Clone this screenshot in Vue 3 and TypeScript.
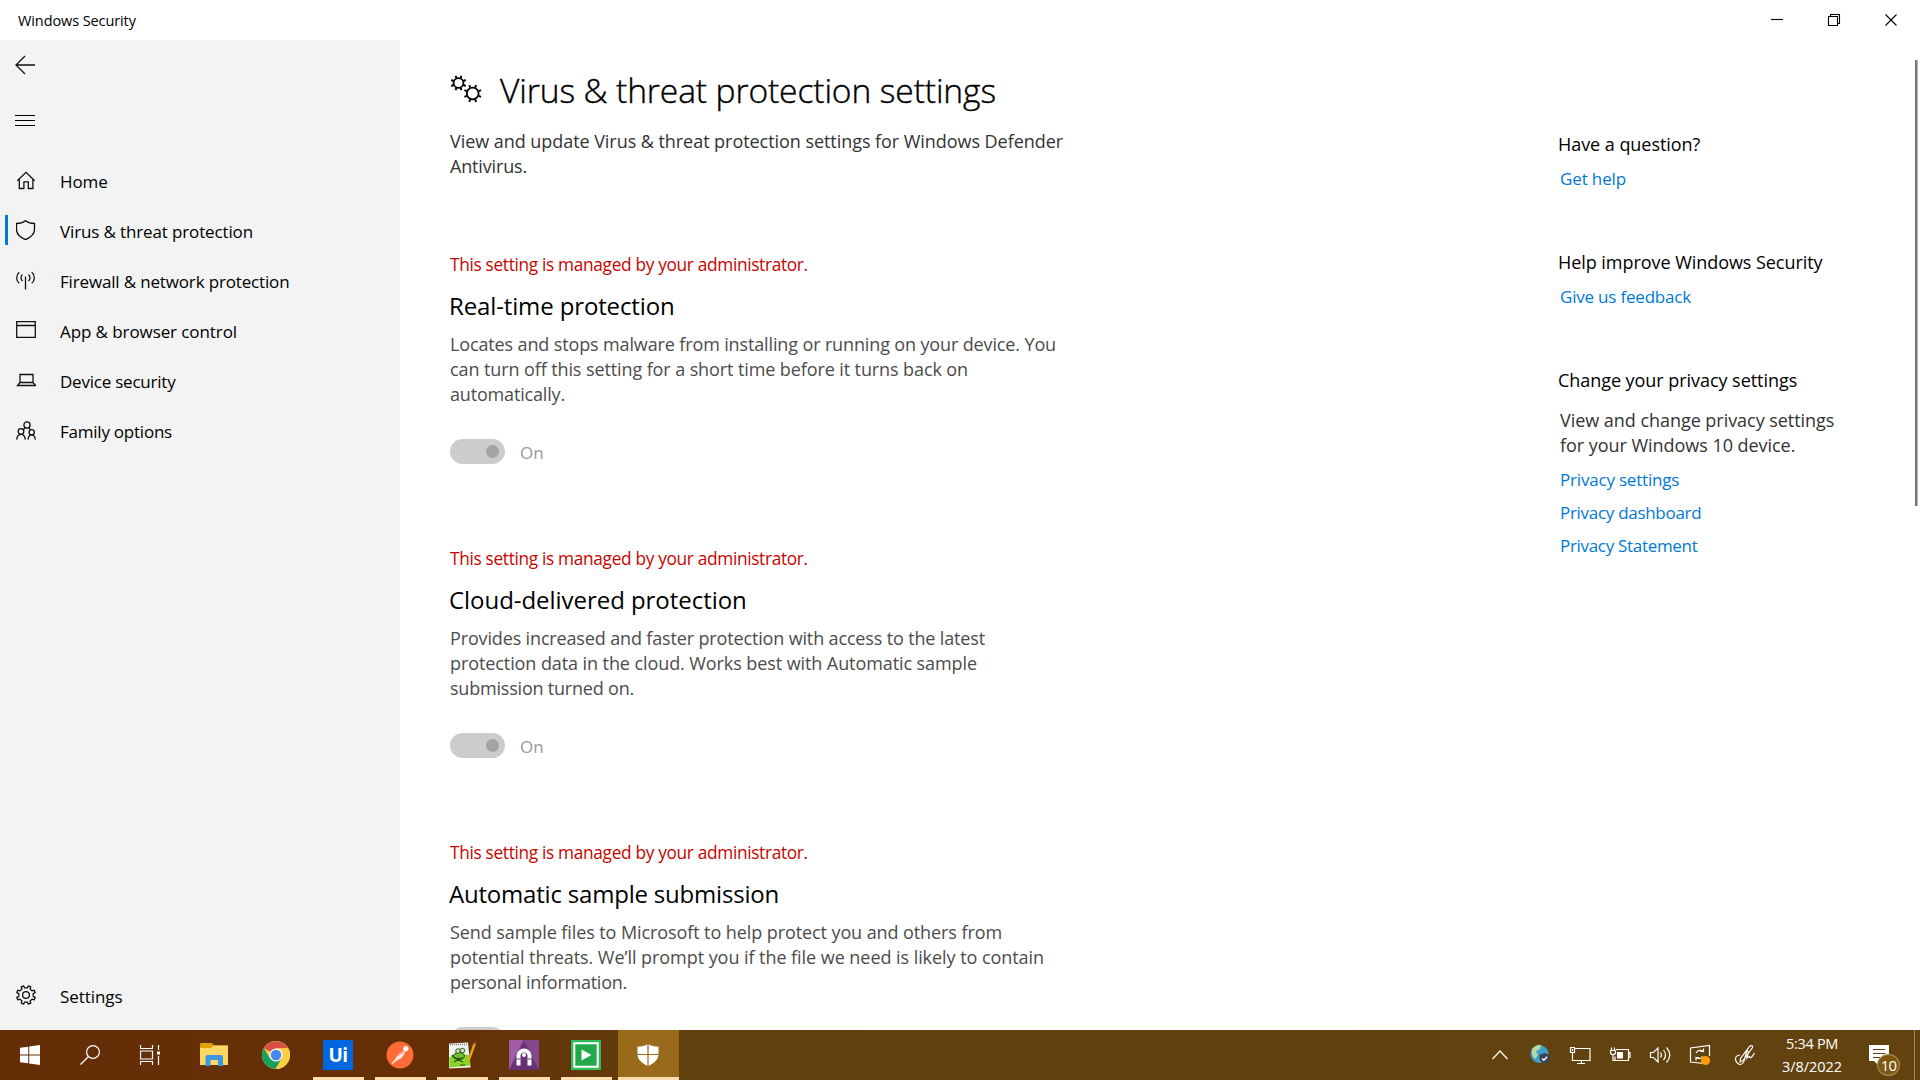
<script setup lang="ts">
/* Each text carries its own tracking, in px. */
type Tracked = [string, number]

const nav: [string, string, number][] = [
  ['home', 'Home', -0.12],
  ['virus', 'Virus & threat protection', -0.134],
  ['firewall', 'Firewall & network protection', -0.16],
  ['app', 'App & browser control', -0.089],
  ['device', 'Device security', -0.22],
  ['family', 'Family options', -0.23],
]

const sections: { title: Tracked; lines: Tracked[]; state?: string }[] = [
  {
    title: ['Real-time protection', -0.13],
    lines: [
      ['Locates and stops malware from installing or running on your device. You', -0.133],
      ['can turn off this setting for a short time before it turns back on', -0.101],
      ['automatically.', -0.17],
    ],
    state: 'On',
  },
  {
    title: ['Cloud-delivered protection', -0.045],
    lines: [
      ['Provides increased and faster protection with access to the latest', -0.148],
      ['protection data in the cloud. Works best with Automatic sample', -0.086],
      ['submission turned on.', -0.205],
    ],
    state: 'On',
  },
  {
    title: ['Automatic sample submission', -0.2],
    lines: [
      ['Send sample files to Microsoft to help protect you and others from', -0.087],
      ['potential threats. We’ll prompt you if the file we need is likely to contain', -0.055],
      ['personal information.', -0.247],
    ],
  },
]

const privacyLinks: Tracked[] = [
  ['Privacy settings', -0.19],
  ['Privacy dashboard', -0.29],
  ['Privacy Statement', -0.31],
]

const ls = (v: number) => ({ letterSpacing: v + 'px' })

/* Toothed outline for the settings glyph, drawn around (c, c). */
function gear(c: number, teeth: number, outer: number, inner: number): string {
  const pts: string[] = []
  const step = (Math.PI * 2) / teeth
  const shape: [number, number][] = [[-0.26, inner], [-0.17, outer], [0.17, outer], [0.26, inner]]
  for (let i = 0; i < teeth; i++) {
    for (const [o, r] of shape) {
      const a = (i + o + 0.5) * step
      pts.push(`${(c + r * Math.cos(a)).toFixed(2)} ${(c + r * Math.sin(a)).toFixed(2)}`)
    }
  }
  return 'M' + pts.join('L') + 'Z'
}
const settingsGear = gear(10, 8, 9.5, 7.3)

/* Short radial strokes around a ring: the teeth of the heading's two gears. */
function ticks(cx: number, cy: number, n: number, r0: number, r1: number): string {
  let d = ''
  for (let i = 0; i < n; i++) {
    const a = ((i + 0.5) * Math.PI * 2) / n
    d += `M${(cx + r0 * Math.cos(a)).toFixed(2)} ${(cy + r0 * Math.sin(a)).toFixed(2)}L${(cx + r1 * Math.cos(a)).toFixed(2)} ${(cy + r1 * Math.sin(a)).toFixed(2)}`
  }
  return d
}
const headTicks = ticks(8.5, 8, 8, 5.3, 7.8) + ticks(22.7, 18.5, 8, 6.3, 9)
</script>

<template>
  <div class="desktop">
    <header class="titlebar">
      <span class="t-cap">Windows Security</span>
      <div class="wbtns">
        <svg viewBox="0 0 57 40"><path d="M22 19.500h12" /></svg>
        <svg viewBox="0 0 57 40"><path d="M22.500 16.500h9v9h-9zM24.500 16.500v-2h9v9h-2" /></svg>
        <svg viewBox="0 0 57 40"><path d="M22.500 14.500l11 11M33.500 14.500l-11 11" /></svg>
      </div>
    </header>

    <div class="body">
      <aside class="side">
        <svg class="back" viewBox="0 0 20 20"><path d="M20 10H1M10 1L1 10l9 9" /></svg>
        <svg class="burger" viewBox="0 0 20 12"><path d="M0 .5h20M0 5.500h20M0 10.500h20" /></svg>
        <nav>
          <div v-for="[id, label, sp] in nav" :key="id" class="item" :class="{ on: id === 'virus' }">
            <svg viewBox="0 0 20 20">
              <template v-if="id === 'home'"><path d="M1.300 10.800L10 2.300l8.700 8.500M3.300 9.500v9h4.600v-6.700h4.400v6.700h4.600v-9" /></template>
              <template v-else-if="id === 'virus'"><path d="M9.500.8c2.600 2 5.600 2.700 9 2.700v6.100c0 4.600-3.700 7.800-9 10.100C4.200 17.400.5 14.200.5 9.600V3.500c3.400 0 6.400-.7 9-2.700z" /></template>
              <template v-else-if="id === 'firewall'"><path d="M9.500 6.500v13M3.300 2.300C-.2 5-.2 10.500 3.300 13.200M6.500 4.500c-2 1.700-2 4.900 0 6.600M15.700 2.300c3.500 2.700 3.500 8.200 0 10.900M12.500 4.500c2 1.700 2 4.900 0 6.600" /></template>
              <template v-else-if="id === 'app'"><path d="M.7 1.700h18.600v15.600H.7zM.7 5.500h18.600" /></template>
              <template v-else-if="id === 'device'"><path d="M4 4.500h13v8H4zM4 12.500l-2.500 3h18l-2.500-3" /></template>
              <template v-else><circle cx="11" cy="5" r="3.100" /><circle cx="5" cy="11.500" r="2.800" /><circle cx="15.700" cy="12.300" r="2.600" /><path d="M.7 19.600c.3-3.300 2-5.300 4.300-5.300s4 2 4.300 5.300M12 19.600c.3-2.900 1.600-4.700 3.700-4.700s3.300 1.800 3.600 4.700M9.200 7.700L7.500 9.500M12.900 7.700l1.300 2" /></template>
            </svg>
            <span :style="ls(sp)">{{ label }}</span>
          </div>
        </nav>
        <div class="item foot">
          <svg viewBox="0 0 20 20"><path :d="settingsGear" stroke-linejoin="round" /><circle cx="10" cy="10" r="3.400" /></svg>
          <span :style="ls(-0.06)">Settings</span>
        </div>
      </aside>

      <main class="main">
        <div class="col">
          <div class="h1row">
            <svg viewBox="0 0 32 28"><circle cx="8.500" cy="8" r="4.900" /><circle cx="22.700" cy="18.500" r="5.900" /><path :d="headTicks" stroke-width="2" /></svg>
            <h1>Virus &amp; threat protection settings</h1>
          </div>
          <p class="intro"><span :style="ls(-0.052)">View and update Virus &amp; threat protection settings for Windows Defender</span><br><span :style="ls(-0.16)">Antivirus.</span></p>
          <section v-for="s in sections" :key="s.title[0]">
            <p class="admin">This setting is managed by your administrator.</p>
            <h2 :style="ls(s.title[1])">{{ s.title[0] }}</h2>
            <p class="desc"><template v-for="[l, sp] in s.lines" :key="l"><span :style="ls(sp)">{{ l }}</span><br></template></p>
            <div class="tog"><i><b /></i><span v-if="s.state">{{ s.state }}</span></div>
          </section>
        </div>
        <aside class="right">
          <h3>Have a question?</h3>
          <a :style="ls(-0.13)">Get help</a>
          <h3 class="g">Help improve Windows Security</h3>
          <a :style="ls(-0.2)">Give us feedback</a>
          <h3 class="g">Change your privacy settings</h3>
          <p>View and change privacy settings<br>for your Windows 10 device.</p>
          <a v-for="[l, sp] in privacyLinks" :key="l" :style="ls(sp)">{{ l }}</a>
        </aside>
        <div class="scroll" />
      </main>
    </div>

    <footer class="bar">
      <div class="cell s"><svg viewBox="0 0 20 20" width="20"><path fill="#fff" d="M0 2.800L8.200 1.700V9.500H0zM9.200 1.500L20 0v9.500H9.200zM0 10.500h8.200v7.800L0 17.200zM9.200 10.500H20V20L9.200 18.500z" /></svg></div>
      <div class="cell s"><svg viewBox="0 0 20 20" width="20" class="ln"><circle cx="13" cy="7" r="6.400" /><path d="M8.500 11.500L.5 19.500" /></svg></div>
      <div class="cell s"><svg viewBox="0 0 20 20" width="20" class="ln"><path d="M.5 0v3.500h12V0M.5 6h12v8H.5zM.5 20v-3.500h12V20M18.500 0v5M18.500 11v9" /><path d="M17 6.500h3v3h-3z" fill="#fff" stroke="none" /></svg></div>
      <div class="cell"><svg viewBox="0 0 28 24" width="28">
        <path d="M0 1.500Q0 0 1.500 0H12l2 2.500H26.500Q28 2.500 28 4V22H0z" fill="#e2a000" /><path d="M0 5h11l2.500-2.500H28V22H0z" fill="#ffd766" /><path d="M5.500 23V14Q5.500 12 7.500 12H21Q23 12 23 14v9h-5v-6h-7.500v6z" fill="#3b97e0" /></svg></div>
      <div class="cell"><svg viewBox="0 0 28 28" width="28">
        <circle cx="14" cy="14" r="14" fill="#fdce44" /><path d="M14 14L1.900 7A14 14 0 0 1 26.100 7.200H14z" fill="#d94f43" /><path d="M1.900 7A14 14 0 0 0 13.500 28L20 17.500 14 14 8 17.500z" fill="#17a05e" /><path d="M14 7.200h12.200A14 14 0 0 1 13.500 28l6.300-10.500z" fill="#fdce44" /><circle cx="14" cy="14" r="6.600" fill="#f1f1f1" /><circle cx="14" cy="14" r="5.200" fill="#4687f4" /></svg></div>
      <div class="cell run"><div class="ui">Ui</div></div>
      <div class="cell run"><svg viewBox="0 0 28 28" width="28">
        <circle cx="14" cy="14" r="13.500" fill="#ff6c37" /><circle cx="19.800" cy="7.700" r="2.600" fill="#fff" /><path d="M18.500 9.500L12.500 13 9.500 17.500 5.500 22.500l.7.400 5-3.600 3.800-1.800 3.500-4.500z" fill="#fdeae3" /><path d="M12 14.500l5-3" stroke="#ff6c37" stroke-width=".8" /></svg></div>
      <div class="cell run"><svg viewBox="0 0 30 30" width="30">
        <path d="M2 3.500l19-1 2.500 25L2 28.500z" fill="#f1f3ee" /><path d="M2.300 17Q10 13 22.500 15l1 10.500-21.200 2z" fill="#8ed32d" /><path d="M3 4.500h17" stroke="#777" stroke-width="1.600" stroke-dasharray="1 1" /><ellipse cx="12" cy="16" rx="5.500" ry="3.500" fill="#6fc22c" stroke="#1f4a12" /><circle cx="11" cy="11" r="2.300" fill="#c4e3b0" stroke="#3a5a35" /><circle cx="15.500" cy="10.500" r="2.300" fill="#c4e3b0" stroke="#3a5a35" /><path d="M5 15q1.500 3 5 3.500l6-.5M7 22q4-3.500 9 0M13 25h5" stroke="#1f4a12" stroke-width="1.200" /><path d="M28 3l-5.500 15-1.500 2" stroke="#e9a915" stroke-width="2.400" /><path d="M28.600 1.500L27.500 4" stroke="#7d4a2b" stroke-width="2.400" /></svg></div>
      <div class="cell run"><svg viewBox="0 0 30 30" width="30">
        <path d="M0 0h30v30H0z" fill="#86478f" /><path d="M0 0h14L3 24 0 30z" fill="#a05ca5" /><path d="M0 30L15 1l15 29z" fill="#5f2a6c" opacity=".75" /><path d="M9.500 25.500V16a5.500 5.500 0 0 1 11 0v9.500" fill="none" stroke="#fff" stroke-width="4" /><circle cx="15" cy="15" r="2" fill="#fff" /><path d="M5.500 19h6M18.500 19h6" stroke="#703a7c" /></svg></div>
      <div class="cell run"><svg viewBox="0 0 30 30" width="30">
        <path d="M0 0h30v30H0z" fill="#2ebd59" /><path d="M3.300 3.300h23.400v23.400H3.300z" fill="#22a94b" stroke="#fff" stroke-width="2" /><path d="M10.500 9.500l10 5.500-10 5.500z" fill="#fff" /></svg></div>
      <div class="cell run act"><svg viewBox="0 0 22 22" width="22">
        <path d="M11 0c3 2 6.500 2.700 10.500 2.700V10c0 5.500-4.300 9.300-10.500 12C4.800 19.300.5 15.500.5 10V2.700C4.500 2.700 8 2 11 0z" fill="#fff" /><path d="M11 0v22M0 10.500h22" stroke="#986a1a" stroke-width="1.200" /></svg></div>

      <div class="tray ln">
        <svg viewBox="0 0 40 30"><path d="M12.500 19l7.500-8 7.500 8" /></svg>
        <svg viewBox="0 0 40 30"><g stroke="none"><circle cx="19.500" cy="14" r="9" fill="#3f9fc9" /><path d="M12 9q5-5 9-4l-1 4-4 2 2 4-3 4q-4-4-3-10z" fill="#b5d8a8" /><path d="M24.500 13l5 1.800v3.700q-.8 4-5 5.500-4.200-1.500-5-5.500v-3.700z" fill="#3b4654" /></g><path d="M22.200 18.500l1.700 1.700 3.200-3.400" stroke-width="1.400" /></svg>
        <svg viewBox="0 0 40 30"><path d="M15 8.500h15v12H12.500V13M21.500 20.500v3M17 23.500h8M10.500 7.500h4v5h-4zM12.500 9v2" /></svg>
        <svg viewBox="0 0 40 30"><path d="M16 9.500h12.500v11H15v-4M28.500 12.500h1.500v5h-1.500M11.500 7.500v3M14.500 7.500v3M10.500 10.500h5v2q0 2-2.500 2t-2.500-2zM13 14.500v6h2" /><path d="M17 12h6v6.500h-6z" fill="#fff" stroke="none" /></svg>
        <svg viewBox="0 0 40 30"><path d="M10.500 12.500h3l4.500-4.500v14l-4.500-4.500h-3zM20.500 12.500q2 2.500 0 5M23.500 10q4 5 0 10M26.500 7.500q6.500 7.500 0 15" /></svg>
        <svg viewBox="0 0 40 30"><path d="M24 23.500L10.500 22V8l19-2.500V16M16 13q2.500-4.500 7.500-1.500V8.500M23.500 11.500h-3.500M22.500 16.500q-2.500 3.500-6.500 1v3M16 17.500h3" /><circle cx="25.500" cy="20.500" r="4.600" fill="#ff9c07" stroke="none" /></svg>
        <svg class="pen" viewBox="0 0 40 30"><path d="M26 5.500q2 0 1.500 2L18 20.500l-3 1.500.5-3.500L24.500 6.500zM15 15q-4.500.5-4.500 4t4 5.500q4 0 5-5l2-8q2-2 1.500 3l-1 3.500q2.500-2.500 3-.500 1 1.500 4.500-4.500" /></svg>
        <div class="clock"><span :style="ls(-0.3)">5:34 PM</span><span :style="ls(-0.05)">3/8/2022</span></div>
        <div class="note"><svg viewBox="0 0 20 20" width="20"><path d="M0 0h20v16H9v4l-4-4H0z" fill="#fff" stroke="none" /><path d="M4 4.500h12M4 8.500h12M4 12.500h7" stroke="#62420f" /></svg><em>10</em></div>
        <div class="peek" />
      </div>
    </footer>
  </div>
</template>

<style>
body { overflow: hidden; }
</style>
<style scoped>
.desktop { width: 1920px; height: 1080px; display: flex; flex-direction: column; background: #fff; color: #000; font-family: "Open Sans", "Noto Sans", sans-serif; font-size: 18px; line-height: 25px; overflow: hidden; }
h1, h2, h3, p { margin: 0; font-weight: 400; }
svg { display: block; fill: none; }
span, h1, h2, h3, a, p { white-space: nowrap; }

.titlebar { height: 40px; flex: none; display: flex; align-items: center; justify-content: space-between; padding-left: 18px; }
.t-cap { font-size: 14.500px; letter-spacing: -.1px; }
.wbtns { display: flex; }
.wbtns svg { width: 57px; height: 40px; stroke: #000; stroke-width: 1.100; }

.body { flex: 1; display: flex; min-height: 0; }
.side { width: 400px; background: #f3f3f3; display: flex; flex-direction: column; font-size: 17px; }
.side svg { stroke: #111; stroke-width: 1.300; }
.back { width: 20px; height: 20px; margin: 15px 0 0 15px; }
.burger { width: 20px; height: 12px; margin: 40px 0 0 15px; }
.side .burger { stroke: #000; stroke-width: 1; }
nav { margin-top: 28px; }
.item { height: 50px; display: flex; align-items: center; gap: 24px; padding-left: 16px; position: relative; }
.item svg { width: 20px; height: 20px; flex: none; }
.item span { margin-top: 3px; }
.item.on::before { content: ''; position: absolute; left: 5px; top: 10px; width: 3px; height: 30px; background: #0078d7; }
.foot { margin-top: auto; margin-bottom: 10px; }

.main { flex: 1; display: flex; position: relative; min-width: 0; overflow: hidden; }
.col { width: 700px; margin-left: 50px; }
.h1row { display: flex; align-items: flex-start; gap: 18px; padding-top: 25px; height: 51px; }
.h1row svg { width: 32px; height: 28px; margin-top: 10px; stroke: #000; stroke-width: 1.800; flex: none; }
h1 { font-size: 33.600px; font-weight: 300; line-height: 50px; letter-spacing: -.11px; -webkit-text-stroke: .4px #000; }
.intro { color: #333; margin-top: 13px; }
section { height: 294px; box-sizing: border-box; padding-top: 73px; }
.admin { color: #c50500; font-size: 17.300px; letter-spacing: -.33px; }
h2 { font-size: 24px; line-height: 34px; margin: 12px 0 9px -1px; }
.desc { color: #4c4c4c; height: 75px; }
.tog { display: flex; align-items: center; gap: 15px; height: 25px; margin-top: 32px; color: #999; }
.tog i { width: 55px; height: 25px; border-radius: 13px; background: #ccc; display: flex; align-items: center; justify-content: flex-end; }
.tog b { width: 13px; height: 13px; border-radius: 50%; background: #a3a3a3; margin-right: 6px; }
.tog span { margin-top: 2px; font-size: 17px; }

.right { margin-left: 409px; width: 300px; padding-top: 92px; display: flex; flex-direction: column; align-items: flex-start; }
.right a { color: #0078d7; font-size: 17px; margin-top: 9px; margin-left: 1px; }
.right h3 { font-size: 18px; letter-spacing: -.05px; margin-left: -1px; }
.right h3.g { margin-top: 59px; }
.right p { color: #333; margin: 15px 0 0 1px; letter-spacing: -.04px; }
.right a + a { margin-top: 8px; }
.scroll { position: absolute; right: 2px; top: 20px; width: 2px; height: 446px; background: #767676; border-right: 1px solid #bbb; }

.bar { height: 50px; flex: none; display: flex; background: linear-gradient(90deg, #652e06 0, #652f07 440px, #62400e 700px, #62430f); }
.cell { width: 62px; display: flex; align-items: center; justify-content: center; position: relative; }
.cell.s { width: 60px; }
.cell.s:nth-child(3) { margin-right: 3px; }
.ln { stroke: #fff; stroke-width: 1.200; }
.run::after { content: ''; position: absolute; left: 6px; bottom: 0; width: 51px; height: 3px; background: #ffdcb0; }
.ui { width: 30px; height: 30px; background: #0067df; color: #fff; font-weight: 700; font-size: 19px; letter-spacing: -.5px; line-height: 30px; text-align: center; }
.act { background: #986a1a; width: 61px; margin-left: 1px; }
.act svg { margin-right: 2px; }
.act::after { left: 0; width: 61px; }

.tray { margin-left: auto; display: flex; align-items: center; height: 50px; }
.tray > svg { width: 40px; height: 30px; stroke-width: 1.200; }
.tray > svg.pen { margin-left: 5px; }
.clock { width: 94px; display: flex; flex-direction: column; align-items: center; font-size: 14.500px; line-height: 23px; color: #fff; stroke: none; padding-right: 3px; }
.note { margin-left: 7px; width: 45px; position: relative; }
.note em { position: absolute; left: 8px; top: 9px; width: 21px; height: 20px; border: 1px solid #a98d5f; border-radius: 50%; background: #80570f; color: #fff; font-style: normal; font-size: 15px; letter-spacing: -.8px; line-height: 20px; text-align: center; }
.peek { width: 5px; height: 50px; border-left: 1px solid #a08d6d; }
</style>
